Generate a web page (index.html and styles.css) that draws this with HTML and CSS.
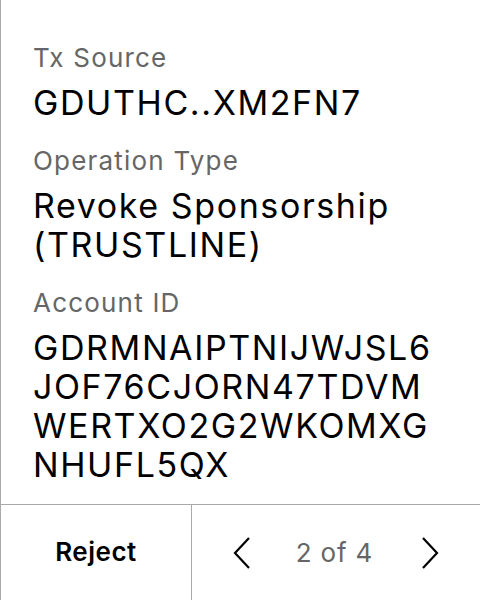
FILE: index.html
```html
<!DOCTYPE html>
<html>
<head>
<meta charset="utf-8">
<link rel="stylesheet" href="styles.css">
</head>
<body>
<div class="panel">
  <div class="content">
    <div class="field">
      <div class="label">Tx Source</div>
      <div class="value">GDUTHC..XM2FN7</div>
    </div>
    <div class="field">
      <div class="label">Operation Type</div>
      <div class="value">Revoke Sponsorship<br>(TRUSTLINE)</div>
    </div>
    <div class="field">
      <div class="label">Account ID</div>
      <div class="value">GDRMNAIPTNIJWJSL6<br>JOF76CJORN47TDVM<br>WERTXO2G2WKOMXG<br>NHUFL5QX</div>
    </div>
  </div>
  <div class="footer">
    <div class="reject">Reject</div>
    <div class="nav">
      <svg class="chev" width="18" height="34" viewBox="0 0 18 34"><path d="M16 2 L2 17 L16 32" fill="none" stroke="#000" stroke-width="2.2"/></svg>
      <span class="pager">2 of 4</span>
      <svg class="chev" width="18" height="34" viewBox="0 0 18 34"><path d="M2 2 L16 17 L2 32" fill="none" stroke="#000" stroke-width="2.2"/></svg>
    </div>
  </div>
</div>
</body>
</html>
```
FILE: styles.css
```css
html, body {
  margin: 0;
  padding: 0;
  background: #fff;
}
body {
  font-family: Inter, "Noto Sans", sans-serif;
  color: #000;
}
.panel {
  width: 480px;
  height: 600px;
  box-sizing: border-box;
  border-left: 1px solid #aaa;
  display: flex;
  flex-direction: column;
}
.content {
  flex: 1;
  padding: 40px 0 0 32px;
  display: flex;
  flex-direction: column;
  gap: 21px;
}
.label {
  font-size: 26px;
  line-height: 36px;
  letter-spacing: 1.2px;
  color: #666;
}
.value {
  font-size: 34px;
  line-height: 39px;
  letter-spacing: 1.6px;
  margin-top: 7px;
}
.footer {
  height: 96px;
  box-sizing: border-box;
  border-top: 1px solid #aaa;
  display: flex;
}
.reject {
  width: 191px;
  border-right: 1px solid #aaa;
  display: flex;
  align-items: center;
  justify-content: center;
  font-size: 26px;
  font-weight: 600;
  letter-spacing: 0.5px;
  padding-bottom: 2px;
  box-sizing: border-box;
}
.nav {
  flex: 1;
  display: flex;
  align-items: center;
  justify-content: space-between;
  padding: 0 41px 0 41px;
}
.pager {
  font-size: 26px;
  letter-spacing: 0.8px;
  color: #666;
  margin-right: 3px;
}
.chev {
  display: block;
}
```
